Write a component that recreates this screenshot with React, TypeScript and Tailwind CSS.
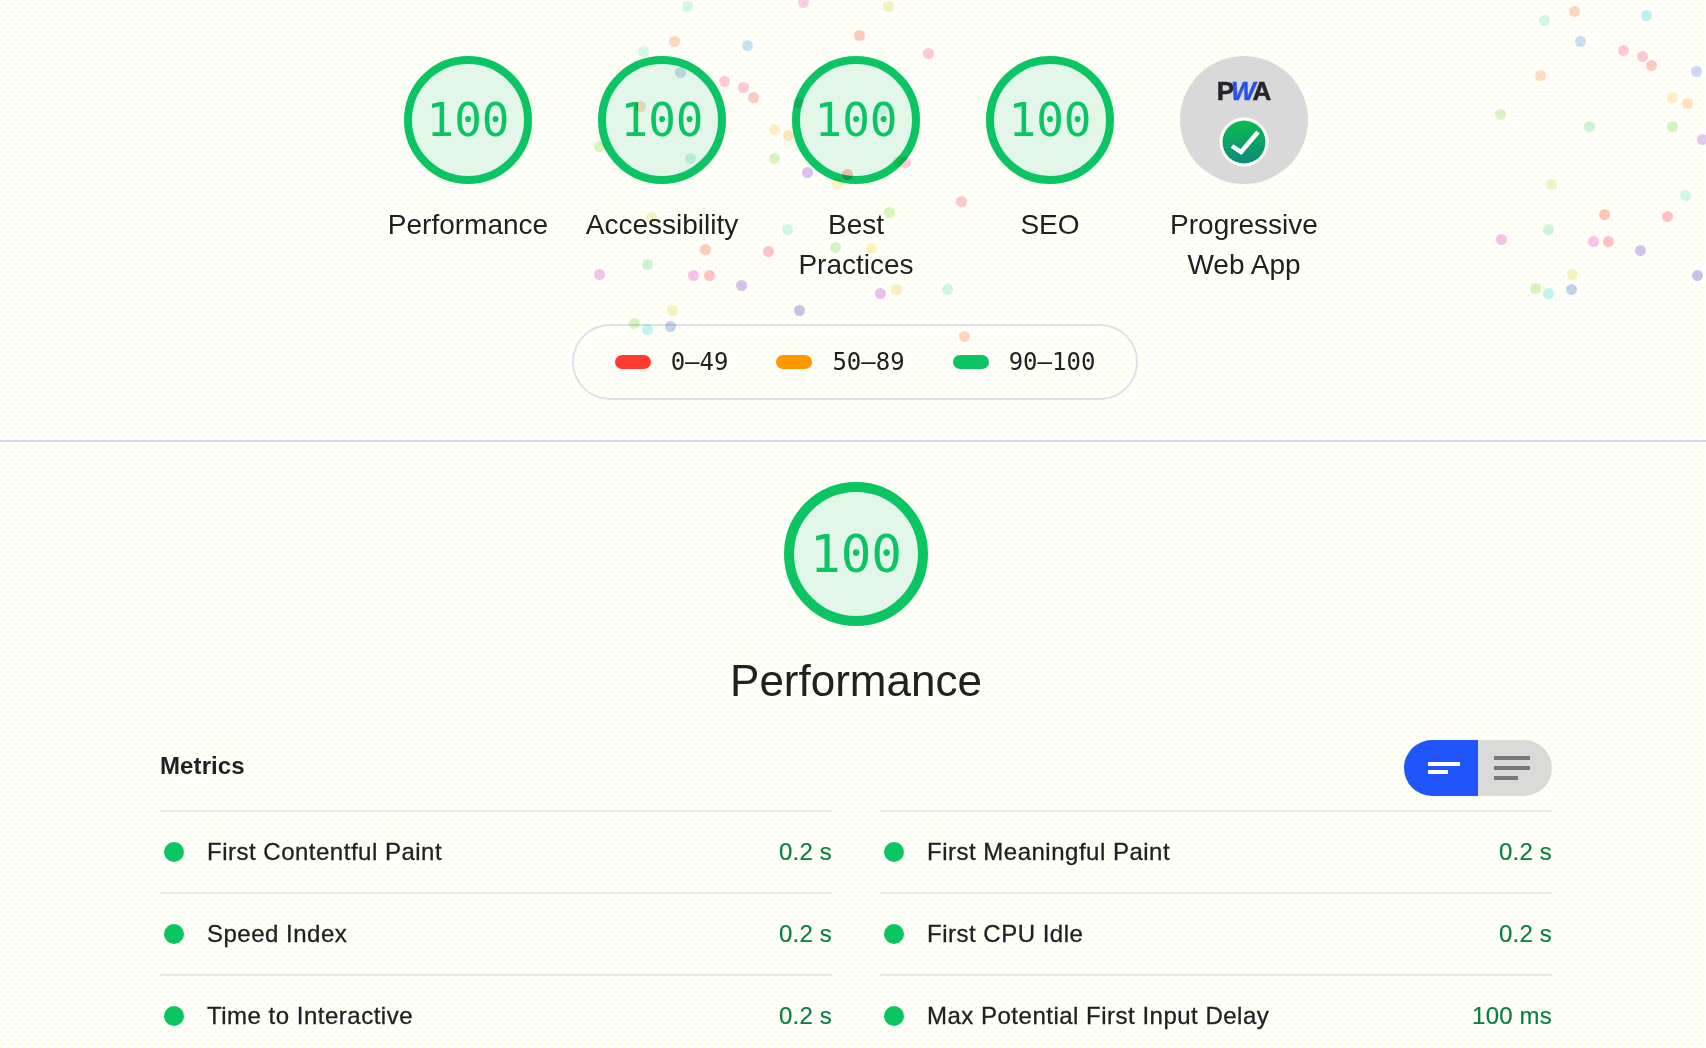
const sans = "font-['Liberation_Sans',Arial,sans-serif]";
const mono = "font-['DejaVu_Sans_Mono',monospace]";

const confetti: [number, number, string][] = [
  // right cluster
  [1575, 12, '#ffc4a8'], [1545, 21, '#bdf5e0'], [1647, 16, '#a8e8f5'], [1581, 42, '#b5d0f0'],
  [1624, 51, '#ffb0d0'], [1643, 57, '#ffb0d0'], [1652, 66, '#ffb4a8'], [1697, 72, '#b5c8f5'],
  [1541, 76, '#ffd0a8'], [1673, 98, '#ffe8b0'], [1688, 104, '#ffd8a8'], [1501, 115, '#c8f0a8'],
  [1590, 127, '#b8f0c8'], [1673, 127, '#c0f0b0'], [1703, 140, '#d8b0f5'], [1552, 185, '#e8f0b0'],
  [1686, 196, '#b8f5e8'], [1605, 215, '#ffb0a0'], [1668, 217, '#ffa8b8'], [1549, 230, '#b8f0d0'],
  [1502, 240, '#f0a8e8'], [1594, 242, '#f8a8e8'], [1609, 242, '#ffa8b0'], [1641, 251, '#c0a8f0'],
  [1698, 276, '#b0a8e8'], [1573, 275, '#f0f0a8'], [1536, 289, '#c8f0a8'], [1549, 294, '#a8f0f0'],
  [1572, 290, '#a8c0f0'],
  // center cluster
  [688, 7, '#bdf5e0'], [804, 3, '#f8b8e0'], [675, 42, '#ffc4a8'], [644, 52, '#bdf5e0'],
  [748, 46, '#a8d8f5'], [681, 73, '#b5d0f0'], [725, 82, '#ffb0d0'], [744, 88, '#ffb0d0'],
  [754, 98, '#ffb4a8'], [641, 107, '#ffd0a8'], [775, 130, '#ffe8b0'], [789, 136, '#ffd8a8'],
  [600, 147, '#c8f0a8'], [775, 159, '#c8f0a8'], [691, 159, '#b8f0d0'], [808, 173, '#c8a8f0'],
  [652, 218, '#f0f0a8'], [788, 230, '#b8f5e8'], [706, 250, '#ffb8a0'], [769, 252, '#ffa8b8'],
  [648, 265, '#b8f0c8'], [600, 275, '#f0a8e8'], [694, 276, '#f8a8e8'], [710, 276, '#ffa8b0'],
  [742, 286, '#c0a8f0'], [800, 311, '#b0a8e8'], [673, 311, '#f0f0a8'], [635, 324, '#c8f0a8'],
  [648, 330, '#a8f0f0'], [671, 327, '#a8c0f0'],
  // between best practices and seo
  [889, 7, '#e8f0b0'], [860, 36, '#ffb0a8'], [929, 54, '#ffb0d0'], [799, 103, '#a8d8f0'],
  [906, 163, '#ffb0d0'], [848, 175, '#ffb090'], [838, 184, '#f8f0a8'], [899, 162, '#c8f0a8'],
  [883, 110, '#c8f5f0'], [962, 202, '#ffb0b8'], [890, 213, '#c8f0a8'], [836, 248, '#c0f0b8'],
  [872, 249, '#f8f0a8'], [897, 290, '#f8e8a8'], [881, 294, '#e0a8f0'], [948, 290, '#b8f5e0'],
  [965, 337, '#ffc4a8'],
];

const categories = [
  { name: 'Performance' },
  { name: 'Accessibility' },
  { name: 'Best Practices' },
  { name: 'SEO' },
];

const metrics = [
  ['First Contentful Paint', '0.2 s', 'First Meaningful Paint', '0.2 s'],
  ['Speed Index', '0.2 s', 'First CPU Idle', '0.2 s'],
  ['Time to Interactive', '0.2 s', 'Max Potential First Input Delay', '100 ms'],
];

function Metric({ label, value }: { label: string; value: string }) {
  return (
    <div className="flex h-[82px] items-center border-t-2 border-[#ebebe5] text-[24px]">
      <span className="ml-[4px] mr-[23px] size-5 rounded-full bg-[#0bc563]" />
      <span className="tracking-[0.5px] text-[#212121] [-webkit-text-stroke:0.3px]">{label}</span>
      <span className="ml-auto tracking-[0.2px] text-[#0a7f41] [-webkit-text-stroke:0.2px]">{value}</span>
    </div>
  );
}

export default function App() {
  return (
    <div className={`relative h-[1048px] w-full overflow-hidden bg-[#fffffe] bg-[radial-gradient(circle,#fffbd0_1px,transparent_1px),radial-gradient(circle,#fffbd0_1px,transparent_1px)] bg-[size:8px_8px] bg-[position:0_0,4px_4px] ${sans} text-[#212121]`}>
      <div className="w-[1712px]">
        <div className="flex flex-col items-center border-b-2 border-[#d8d8de] pt-[56px] pb-[40px]">
          <div className="flex">
            {categories.map((c) => (
              <div key={c.name} className="flex w-[194px] flex-col items-center px-[12px]">
                <div className={`flex size-32 items-center justify-center rounded-full border-8 border-[#0bc563] bg-[#e2f7ea] text-[46px] text-[#0bc563] ${mono}`}>
                  100
                </div>
                <div className="mt-[21px] h-[79px] text-center text-[28px] leading-[40px]">{c.name}</div>
              </div>
            ))}
            <div className="flex w-[194px] flex-col items-center px-[12px]">
              <div className="relative flex size-32 flex-col items-center rounded-full bg-[#d9d9d9]">
                <div className="mt-[20px] pr-[3px] text-[26px] leading-[30px] font-bold tracking-[-3px] text-[#24262b] [-webkit-text-stroke:0.5px]">
                  P<span className="text-[#2b50f0] italic">W</span>A
                </div>
                <svg className="absolute left-[39px] top-[61px]" width="50" height="50" viewBox="0 0 50 50">
                  <defs>
                    <linearGradient id="pwaCheck" x1="0" y1="0" x2="0" y2="1">
                      <stop offset="0" stopColor="#0cbc50" />
                      <stop offset="1" stopColor="#0a8a7c" />
                    </linearGradient>
                  </defs>
                  <circle cx="25" cy="25" r="24.5" fill="#fffffb" />
                  <circle cx="25" cy="25" r="21.5" fill="url(#pwaCheck)" />
                  <polyline points="13,29 22,35 39,15" fill="none" stroke="#fff" strokeWidth="4.5" />
                </svg>
              </div>
              <div className="mt-[21px] h-[79px] text-center text-[28px] leading-[40px]">Progressive Web App</div>
            </div>
          </div>

          <div className={`mt-[40px] mr-[2px] flex h-[76px] items-center rounded-full border-2 border-[#e0e0e6] px-[41px] text-[24px] ${mono}`}>
            <span className="mr-[20px] h-[14px] w-9 rounded-full bg-[#ff3b30]" />
            <span>0–49</span>
            <span className="mr-[20px] ml-[48px] h-[14px] w-9 rounded-full bg-[#ff9800]" />
            <span>50–89</span>
            <span className="mr-[20px] ml-[48px] h-[14px] w-9 rounded-full bg-[#0bc563]" />
            <span>90–100</span>
          </div>
        </div>

        <div className="flex flex-col items-center pt-[40px]">
          <div className={`flex size-36 items-center justify-center rounded-full border-[10px] border-[#0bc563] bg-[#e2f7ea] pt-[2px] text-[51px] text-[#0bc563] ${mono}`}>
            100
          </div>
          <h1 className="mt-[29px] text-[44px] leading-[52px]">Performance</h1>
        </div>

        <div className="px-[160px]">
          <div className="mt-[33px] flex h-[70px] items-start justify-between">
            <h2 className="mt-[12px] text-[24px] leading-[28px] font-bold tracking-[0.1px]">Metrics</h2>
            <div className="flex h-14 w-[148px] overflow-hidden rounded-full">
              <div className="flex w-[74px] flex-col items-start gap-1 bg-[#1f55fb] pt-[22px] pl-[24px]">
                <span className="h-1 w-8 bg-white" />
                <span className="h-1 w-5 bg-white" />
              </div>
              <div className="flex w-[74px] flex-col items-start gap-1.5 bg-[#dadad8] pt-4 pl-4">
                <span className="h-1 w-9 bg-[#777777]" />
                <span className="h-1 w-9 bg-[#777777]" />
                <span className="h-1 w-6 bg-[#777777]" />
              </div>
            </div>
          </div>
          <div className="grid grid-cols-2 gap-x-[48px]">
            {metrics.map((m) => [
              <Metric key={m[0]} label={m[0]} value={m[1]} />,
              <Metric key={m[2]} label={m[2]} value={m[3]} />,
            ])}
          </div>
        </div>
      </div>

      <div className="pointer-events-none absolute inset-0 mix-blend-multiply">
        {confetti.map(([x, y, color], i) => (
          <span
            key={i}
            className="absolute size-[11px] rounded-full opacity-70"
            style={{ left: x - 6, top: y - 6, backgroundColor: color }}
          />
        ))}
      </div>
    </div>
  );
}
